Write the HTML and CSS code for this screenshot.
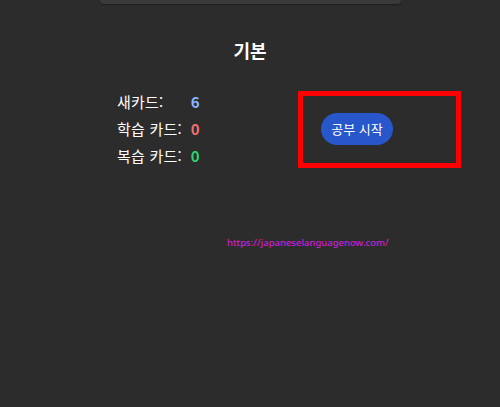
FILE: index.html
```html
<!DOCTYPE html>
<html lang="ko">
<head>
<meta charset="utf-8">
<link rel="stylesheet" href="styles.css">
</head>
<body>
<div class="page">
  <div class="topbar"></div>
  <h1 class="title">기본</h1>
  <div class="overview">
    <div class="stats">
      <span class="label">새카드:</span><span class="num new">6</span>
      <span class="label">학습 카드:</span><span class="num learn">0</span>
      <span class="label">복습 카드:</span><span class="num review">0</span>
    </div>
    <button class="study">공부 시작</button>
  </div>
  <div class="linkrow"><a class="link" href="#">https://japaneselanguagenow.com/</a></div>
  <div class="highlight"></div>
</div>
</body>
</html>
```

FILE: styles.css
```css
html, body {
  margin: 0;
  padding: 0;
  background: #2c2c2c;
}
.page {
  position: relative;
  width: 500px;
  height: 407px;
  font-family: "Noto Sans CJK KR", "Noto Sans", sans-serif;
  color: #ffffff;
}
.topbar {
  width: 301px;
  height: 4px;
  margin: 0 auto 0 100px;
  background: #3a3a3a;
  border-radius: 0 0 6px 6px;
  box-shadow: 0 1px 2px rgba(0,0,0,0.35);
}
.title {
  margin: 36px 0 0 0;
  font-size: 18px;
  line-height: 21px;
  font-weight: 700;
  text-align: center;
}
.overview {
  display: flex;
  align-items: center;
  padding-left: 117px;
  margin-top: 27px;
}
.stats {
  display: grid;
  grid-template-columns: auto auto;
  column-gap: 9px;
  width: 204px;
  justify-content: start;
  font-size: 15px;
  line-height: 27px;
}
.label {
  letter-spacing: 0.2px;
}
.num {
  font-weight: 700;
}
.new { color: #87b8ff; }
.learn { color: #f07070; }
.review { color: #2fd06a; }
.study {
  width: 72px;
  height: 32px;
  border: none;
  border-radius: 16px;
  background: #2757cb;
  color: #ffffff;
  font-family: "Noto Sans CJK KR", "Noto Sans", sans-serif;
  font-size: 13px;
  padding: 0;
  cursor: pointer;
}
.linkrow {
  padding-left: 227px;
  margin-top: 63px;
  line-height: 14px;
}
.link {
  color: #c820d8;
  font-size: 9.5px;
  font-weight: 500;
  text-decoration: none;
  font-family: "Noto Sans", "Noto Sans CJK KR", sans-serif;
}
.highlight {
  position: absolute;
  left: 298px;
  top: 91px;
  width: 153px;
  height: 67px;
  border: 5px solid #ff0000;
}
```
